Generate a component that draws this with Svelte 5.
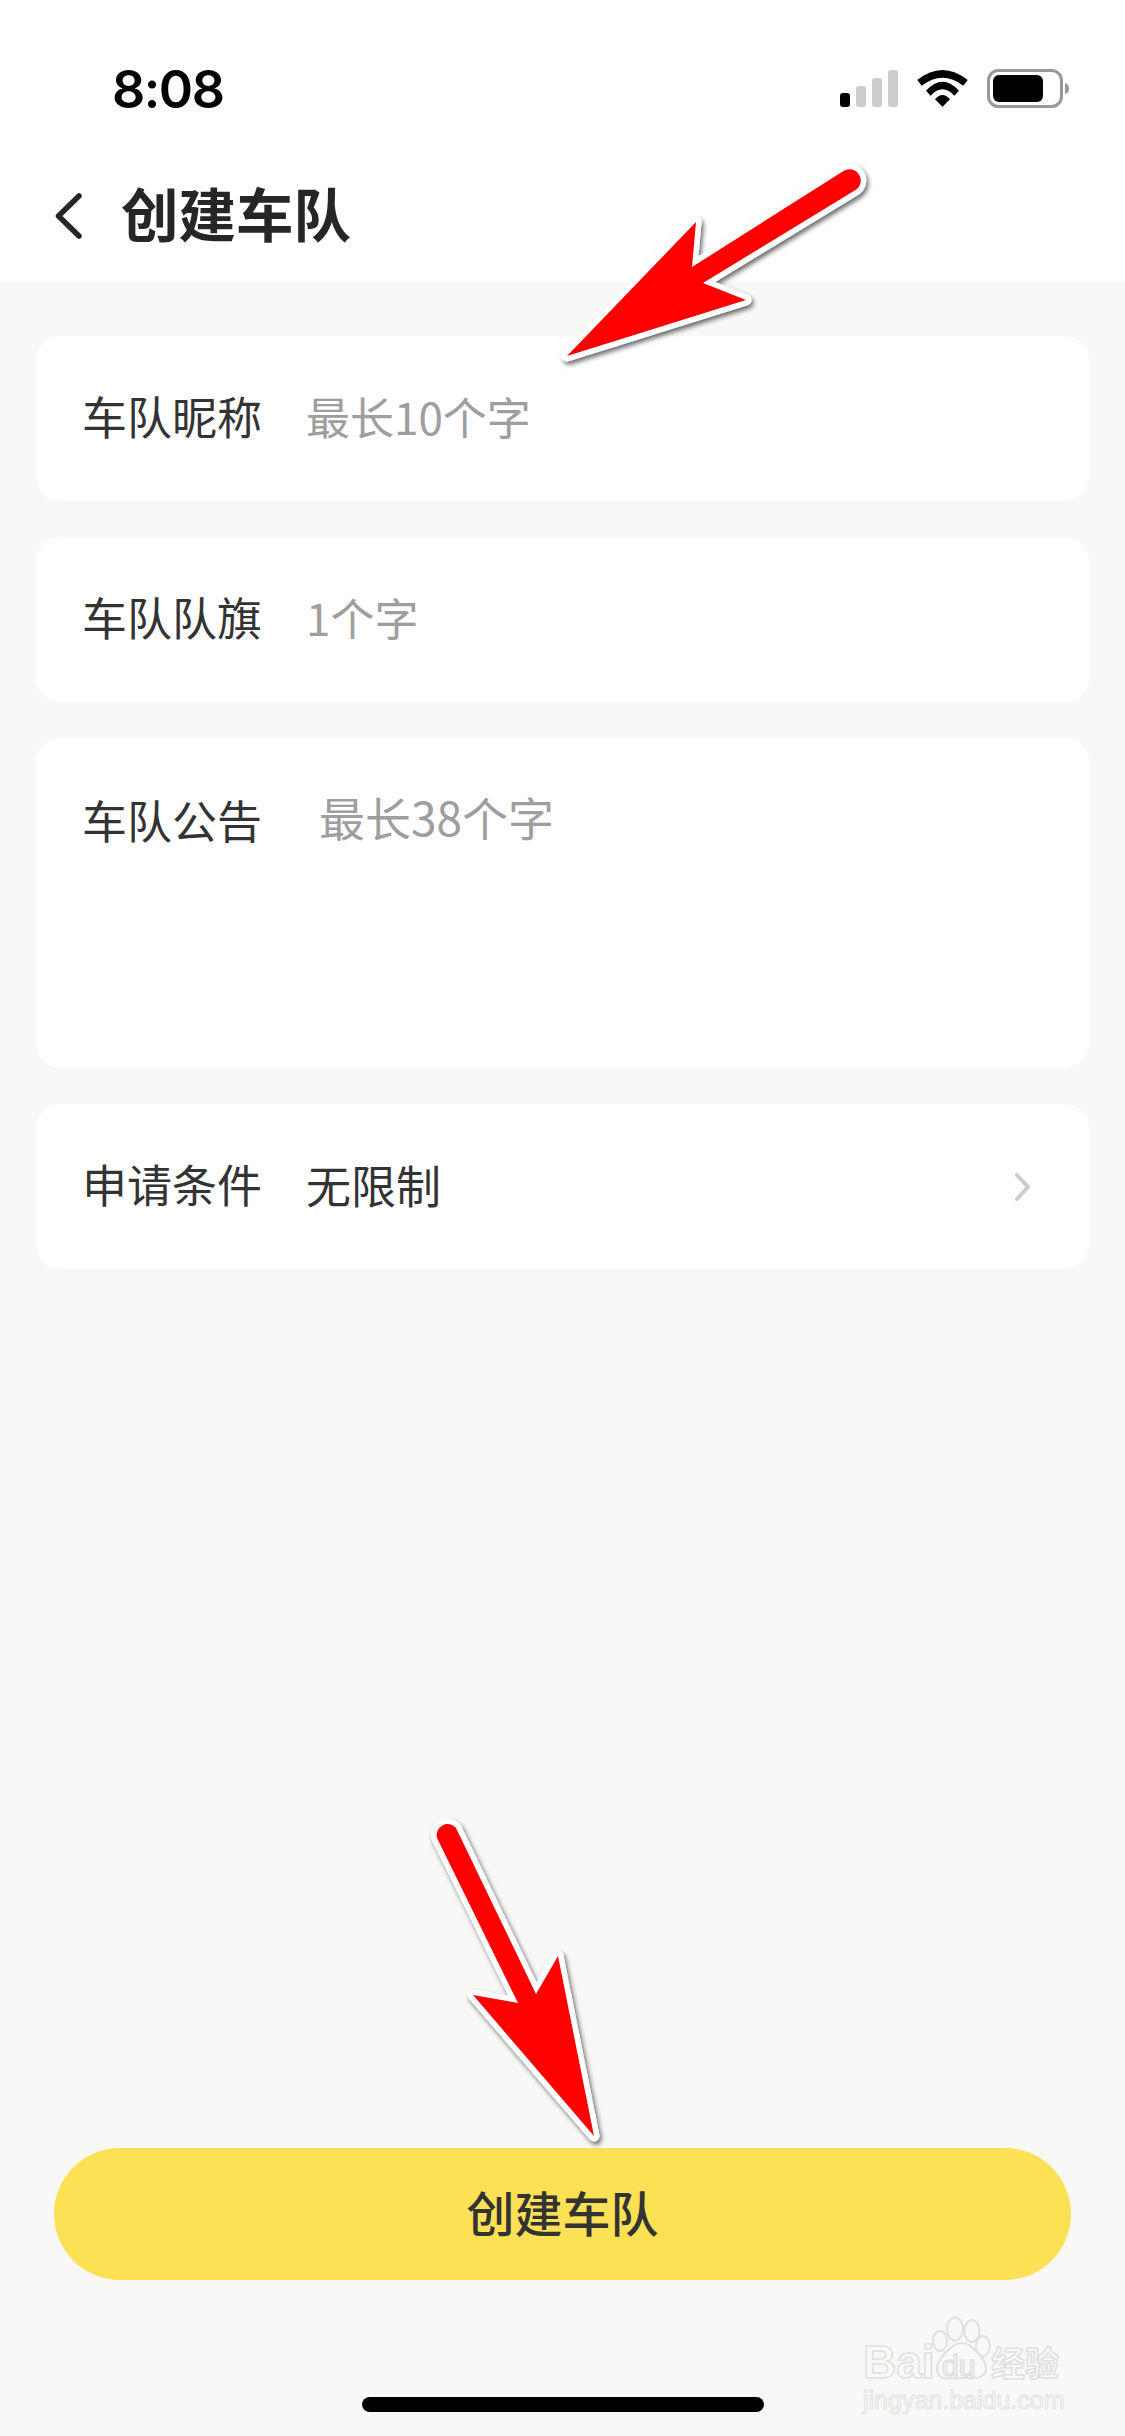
<script>
  const fields = [
    { label: '车队昵称', hint: '最长10个字' },
    { label: '车队队旗', hint: '1个字' }
  ];
</script>

<div class="page">
  <div class="top">
    <div class="status">
      <span class="time">8:08</span>
      <svg class="status-icons" width="234" height="40" viewBox="0 0 234 40">
        <rect x="0" y="24" width="10" height="14" rx="3" fill="#000" />
        <rect x="16" y="17" width="10" height="21" rx="3" fill="#ccc" />
        <rect x="32" y="9" width="10" height="29" rx="3" fill="#ccc" />
        <rect x="48" y="1" width="10" height="37" rx="3" fill="#ccc" />
        <path d="M77.300 11 Q102.500 -9 127.700 11 L123.300 16.700 Q102.500 0.700 81.700 16.700 Z" fill="#000" />
        <path d="M86 21.700 Q102.500 3.700 119 21.700 L114.300 26.700 Q102.500 13.900 90.700 26.700 Z" fill="#000" />
        <path d="M95 30.300 Q102.500 21.700 110 30.300 L102.500 37.700 Z" fill="#000" />
        <rect x="148.500" y="1.500" width="73" height="36" rx="10" fill="none" stroke="#999" stroke-width="3" />
        <rect x="153" y="6" width="50" height="27" rx="6" fill="#000" />
        <path d="M225 14 Q229 15 229 19.500 Q229 24 225 25 Z" fill="#999" />
      </svg>
    </div>
    <div class="nav">
      <svg class="back" width="34" height="52" viewBox="0 0 34 52">
        <path d="M28 6 L7.500 26 L28 46" fill="none" stroke="#262626" stroke-width="5.500" stroke-linecap="round" stroke-linejoin="round" />
      </svg>
      <h1>创建车队</h1>
    </div>
  </div>

  <main>
    {#each fields as f}
      <div class="card">
        <span class="label">{f.label}</span>
        <span class="hint">{f.hint}</span>
      </div>
    {/each}
    <div class="card tall">
      <span class="label">车队公告</span>
      <span class="hint wide">最长38个字</span>
    </div>
    <div class="card">
      <span class="label">申请条件</span>
      <span class="value">无限制</span>
      <svg class="chev" width="20" height="32" viewBox="0 0 20 32">
        <path d="M4 4 L15 16 L4 28" fill="none" stroke="#ccc" stroke-width="4" stroke-linecap="round" stroke-linejoin="round" />
      </svg>
    </div>
  </main>

  <div class="cta">创建车队</div>
  <div class="home-wrap"><div class="home"></div></div>

  <svg class="overlay" width="1125" height="2436" viewBox="0 0 1125 2436">
    <defs>
      <filter id="sh" x="-20%" y="-20%" width="140%" height="140%">
        <feDropShadow dx="2" dy="3" stdDeviation="2.500" flood-color="#000" flood-opacity="0.6" />
      </filter>
    </defs>
    <g filter="url(#sh)">
      <path class="arrow" d="M567 356 L696 222 L692 267 L843.500 171 A11 11 0 0 1 855.500 190 L703 283 L746 300 Z" />
    </g>
    <g filter="url(#sh)">
      <path class="arrow" d="M594 2136 L558 1956 L536 1994 L456 1828 A11 11 0 0 0 437 1838 L518 2003 L473 1995 Z" />
    </g>
  </svg>

  <div class="mark">
    <svg class="paw" width="66" height="76" viewBox="0 0 66 76">
      <g fill="#f8f8f6" stroke="#e0e0e0" stroke-width="2">
        <ellipse cx="19" cy="13" rx="8" ry="11.500" />
        <ellipse cx="36" cy="15" rx="7.500" ry="11" />
        <ellipse cx="4" cy="25" rx="7" ry="10" />
        <ellipse cx="47" cy="30" rx="7" ry="10" />
        <path d="M26 27 C36 27 52 46 50 54 C48 64 36 62 26 62 C16 62 2 66 1 54 C0 44 16 27 26 27 Z" />
      </g>
    </svg>
    <span class="bai">Bai</span>
    <span class="du">du</span>
    <span class="jy">经验</span>
    <span class="url">jingyan.baidu.com</span>
  </div>
</div>

<style>
  :global(body) {
    margin: 0;
    background: #f8f8f6;
  }
  .page {
    position: relative;
    width: 1125px;
    height: 2436px;
    overflow: hidden;
    display: flex;
    flex-direction: column;
    background: #f8f8f6;
    font-family: "Noto Sans CJK SC", "Noto Sans", sans-serif;
  }
  .top {
    background: #fff;
    height: 282px;
    flex: none;
  }
  .status {
    height: 150px;
    display: flex;
    justify-content: space-between;
    padding: 0 51px 0 112px;
    box-sizing: border-box;
    align-items: flex-start;
  }
  .time {
    font-family: Inter, "Liberation Sans", sans-serif;
    font-weight: 600;
    font-size: 52px;
    letter-spacing: -1.500px;
    line-height: 60px;
    margin-top: 60px;
    color: #000;
  }
  .status-icons {
    margin-top: 69px;
  }
  .nav {
    display: flex;
    align-items: center;
    height: 132px;
    padding-left: 51px;
    box-sizing: border-box;
  }
  h1 {
    margin: -9px 0 0 36px;
    font-size: 57.500px;
    line-height: 70px;
    font-weight: 700;
    color: #262626;
  }
  main {
    display: flex;
    flex-direction: column;
    gap: 36px;
    padding: 54px 36px 0;
  }
  .card {
    height: 165px;
    background: #fff;
    border-radius: 24px;
    display: flex;
    align-items: center;
    padding: 0 48px 6px 46px;
    box-sizing: border-box;
    flex: none;
  }
  .card.tall {
    height: 330px;
    align-items: flex-start;
    padding-top: 50px;
  }
  .label {
    font-size: 45px;
    line-height: 64px;
    color: #333;
    width: 180px;
    flex: none;
  }
  .hint {
    font-size: 44px;
    line-height: 64px;
    color: #9e9e9e;
    margin-left: 44px;
  }
  .hint.wide {
    font-size: 46px;
    margin-left: 57px;
    margin-top: -4px;
  }
  .value {
    font-size: 45px;
    line-height: 64px;
    color: #333;
    margin-left: 44px;
    margin-top: 2px;
  }
  .chev {
    margin-left: auto;
    margin-right: 8px;
    margin-top: 6px;
  }
  .cta {
    margin: auto 54px 0;
    height: 132px;
    flex: none;
    border-radius: 66px;
    background: #fce155;
    color: #333;
    font-size: 48px;
    font-weight: 500;
    display: flex;
    align-items: center;
    justify-content: center;
    padding-bottom: 6px;
    box-sizing: border-box;
  }
  .home-wrap {
    height: 156px;
    flex: none;
    display: flex;
    justify-content: center;
    padding-top: 117px;
    box-sizing: border-box;
  }
  .home {
    width: 402px;
    height: 15px;
    border-radius: 8px;
    background: #000;
  }
  .overlay {
    position: absolute;
    left: 0;
    top: 0;
    pointer-events: none;
  }
  .arrow {
    fill: #f00;
    stroke: #fff;
    stroke-width: 11px;
    stroke-linejoin: round;
    paint-order: stroke;
  }
  .mark {
    position: absolute;
    left: 860px;
    top: 2310px;
    width: 210px;
    height: 110px;
    color: #f9f9f7;
  }
  .paw {
    position: absolute;
    left: 76px;
    top: 6px;
    overflow: visible;
  }
  .bai, .du, .jy, .url {
    position: absolute;
    white-space: nowrap;
    -webkit-text-stroke: 1.500px #e0e0e0;
  }
  .bai {
    left: 3px;
    top: 26px;
    font-family: "Liberation Sans", sans-serif;
    font-weight: 700;
    font-size: 46px;
    line-height: 52px;
  }
  .du {
    left: 82px;
    top: 40px;
    font-family: "Liberation Sans", sans-serif;
    font-size: 30px;
    line-height: 32px;
  }
  .jy {
    left: 131px;
    top: 32px;
    font-size: 34px;
    line-height: 40px;
    font-weight: 700;
  }
  .url {
    left: 3px;
    top: 74px;
    font-family: "Liberation Sans", sans-serif;
    font-size: 25px;
    line-height: 32px;
    -webkit-text-stroke: 1px #e2e2e2;
  }
</style>
